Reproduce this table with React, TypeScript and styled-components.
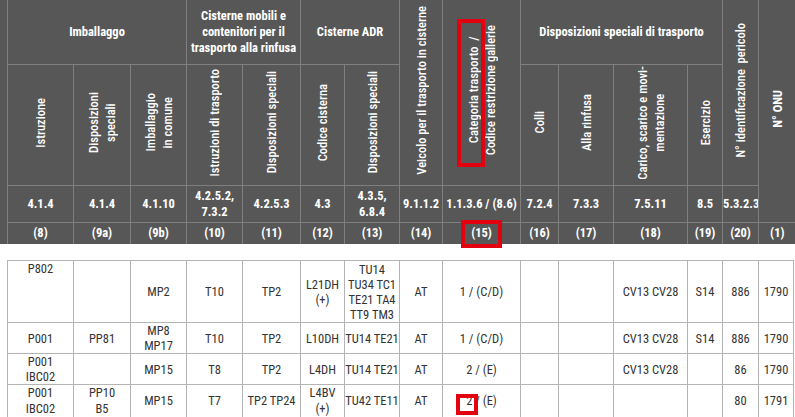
import React from "react";
import styled, { createGlobalStyle } from "styled-components";

const FONT = `Roboto, "Open Sans", "Liberation Sans", sans-serif`;

const Global = createGlobalStyle`
  html, body { margin: 0; padding: 0; background: #ffffff; }
  body { font-family: ${FONT}; font-stretch: 75%; }
`;

const Page = styled.div`
  position: relative;
  width: 795px;
  height: 417px;
  overflow: hidden;
  display: flex;
  flex-direction: column;
  gap: 16px;
`;

const HeaderBand = styled.div`
  background: #575757;
  padding-left: 7px;
`;

const HeadTable = styled.table`
  border-collapse: collapse;
  table-layout: fixed;
  width: 788px;
  border-top: hidden;
  border-right: hidden;
  border-bottom: hidden;
  color: #ffffff;
`;

const Row = styled.tr<{ $h: number }>`
  height: ${(p) => p.$h}px;
`;

const HCell = styled.td<{ $bold?: boolean }>`
  border: 1px solid #7f7f7f;
  padding: 0;
  text-align: center;
  vertical-align: middle;
  font-size: 12.5px;
  font-weight: ${(p) => (p.$bold ? 700 : 500)};
  line-height: 16px;
  overflow: hidden;
  white-space: nowrap;
`;

const Vertical = styled.div`
  display: inline-block;
  writing-mode: vertical-rl;
  transform: rotate(180deg);
  text-align: center;
  line-height: 17px;
  white-space: nowrap;
`;

const BodyWrap = styled.div`
  padding-left: 7px;
`;

const BodyTable = styled.table`
  border-collapse: collapse;
  table-layout: fixed;
  width: 786px;
  color: #333333;
`;

const BCell = styled.td<{ $top?: boolean; $lh: number }>`
  border: 1px solid #b4b4b4;
  padding: 0;
  text-align: center;
  vertical-align: ${(p) => (p.$top ? "top" : "middle")};
  font-size: 12.5px;
  line-height: ${(p) => p.$lh}px;
  overflow: hidden;
  white-space: nowrap;
`;

const Highlight = styled.div`
  position: absolute;
  border: 4px solid #e3000f;
  box-sizing: border-box;
  pointer-events: none;
`;

const widths = [66, 57, 56, 56, 58, 44, 55, 43, 78, 38, 55, 74, 35, 36, 37];
const bodyWidths = [66, 57, 56, 56, 58, 44, 55, 43, 78, 38, 55, 74, 35, 36, 35];

const Lines: React.FC<{ text: string }> = ({ text }) => (
  <>
    {text.split("|").map((t, i, a) => (
      <React.Fragment key={i}>
        {t}
        {i < a.length - 1 && <br />}
      </React.Fragment>
    ))}
  </>
);

const subHeads = [
  "Istruzione",
  "Disposizioni|speciali",
  "Imballaggio|in comune",
  "Istruzioni di trasporto",
  "Disposizioni speciali",
  "Codice cisterna",
  "Disposizioni speciali",
];
const subHeads2 = ["Colli", "Alla rinfusa", "Carico, scarico e movi-|mentazione", "Esercizio"];

const values = [
  "4.1.4",
  "4.1.4",
  "4.1.10",
  "4.2.5.2,|7.3.2",
  "4.2.5.3",
  "4.3",
  "4.3.5,|6.8.4",
  "9.1.1.2",
  "1.1.3.6 / (8.6)",
  "7.2.4",
  "7.3.3",
  "7.5.11",
  "8.5",
  "5.3.2.3",
];

const numbers = ["(8)", "(9a)", "(9b)", "(10)", "(11)", "(12)", "(13)", "(14)", "(15)", "(16)", "(17)", "(18)", "(19)", "(20)", "(1)"];

const rows: { h: number; lh: number; cells: string[] }[] = [
  {
    h: 62,
    lh: 15,
    cells: ["P802", "", "MP2", "T10", "TP2", "L21DH|(+)", "TU14|TU34 TC1|TE21 TA4|TT9 TM3", "AT", "1 / (C/D)", "", "", "CV13 CV28", "S14", "886", "1790"],
  },
  {
    h: 30,
    lh: 15,
    cells: ["P001", "PP81", "MP8|MP17", "T10", "TP2", "L10DH", "TU14 TE21", "AT", "1 / (C/D)", "", "", "CV13 CV28", "S14", "886", "1790"],
  },
  {
    h: 30,
    lh: 15,
    cells: ["P001|IBC02", "", "MP15", "T8", "TP2", "L4DH", "TU14 TE21", "AT", "2 / (E)", "", "", "CV13 CV28", "", "86", "1790"],
  },
  {
    h: 32,
    lh: 16,
    cells: ["P001|IBC02", "PP10|B5", "MP15", "T7", "TP2 TP24", "L4BV|(+)", "TU42 TE11", "AT", "2 / (E)", "", "", "", "", "80", "1791"],
  },
];

export default function App() {
  return (
    <>
      <Global />
      <Page>
        <HeaderBand>
          <HeadTable>
            <colgroup>
              {widths.map((w, i) => (
                <col key={i} style={{ width: w }} />
              ))}
            </colgroup>
            <tbody>
              <Row $h={64}>
                <HCell $bold colSpan={3}>Imballaggo</HCell>
                <HCell $bold colSpan={2}>
                  Cisterne mobili e
                  <br />
                  contenitori per il
                  <br />
                  trasporto alla rinfusa
                </HCell>
                <HCell $bold colSpan={2}>Cisterne ADR</HCell>
                <HCell rowSpan={2}>
                  <Vertical>Veicolo per il trasporto in cisterne</Vertical>
                </HCell>
                <HCell rowSpan={2}>
                  <Vertical>
                    Categoria trasporto&nbsp;&nbsp;/
                    <br />
                    Codice restrizione gallerie
                  </Vertical>
                </HCell>
                <HCell $bold colSpan={4}>Disposizioni speciali di trasporto</HCell>
                <HCell rowSpan={2}>
                  <Vertical>N° identificazione&nbsp;&nbsp;pericolo</Vertical>
                </HCell>
                <HCell $bold rowSpan={3}>
                  <Vertical>N° ONU</Vertical>
                </HCell>
              </Row>
              <Row $h={121}>
                {subHeads.map((t, i) => (
                  <HCell key={i}>
                    <Vertical>
                      <Lines text={t} />
                    </Vertical>
                  </HCell>
                ))}
                {subHeads2.map((t, i) => (
                  <HCell key={"b" + i}>
                    <Vertical>
                      <Lines text={t} />
                    </Vertical>
                  </HCell>
                ))}
              </Row>
              <Row $h={37}>
                {values.map((t, i) => (
                  <HCell $bold key={i}>
                    <Lines text={t} />
                  </HCell>
                ))}
              </Row>
              <Row $h={22}>
                {numbers.map((t, i) => (
                  <HCell $bold key={i}>
                    {t}
                  </HCell>
                ))}
              </Row>
            </tbody>
          </HeadTable>
        </HeaderBand>
        <BodyWrap>
          <BodyTable>
            <colgroup>
              {bodyWidths.map((w, i) => (
                <col key={i} style={{ width: w }} />
              ))}
            </colgroup>
            <tbody>
              {rows.map((r, ri) => (
                <Row $h={r.h} key={ri}>
                  {r.cells.map((c, ci) => (
                    <BCell key={ci} $lh={r.lh} $top={ri === 0 && ci === 0}>
                      <Lines text={c} />
                    </BCell>
                  ))}
                </Row>
              ))}
            </tbody>
          </BodyTable>
        </BodyWrap>
        <Highlight style={{ left: 457, top: 19, width: 28, height: 148 }} />
        <Highlight style={{ left: 461, top: 220, width: 41, height: 28 }} />
        <Highlight style={{ left: 456, top: 394, width: 22, height: 21 }} />
      </Page>
    </>
  );
}
